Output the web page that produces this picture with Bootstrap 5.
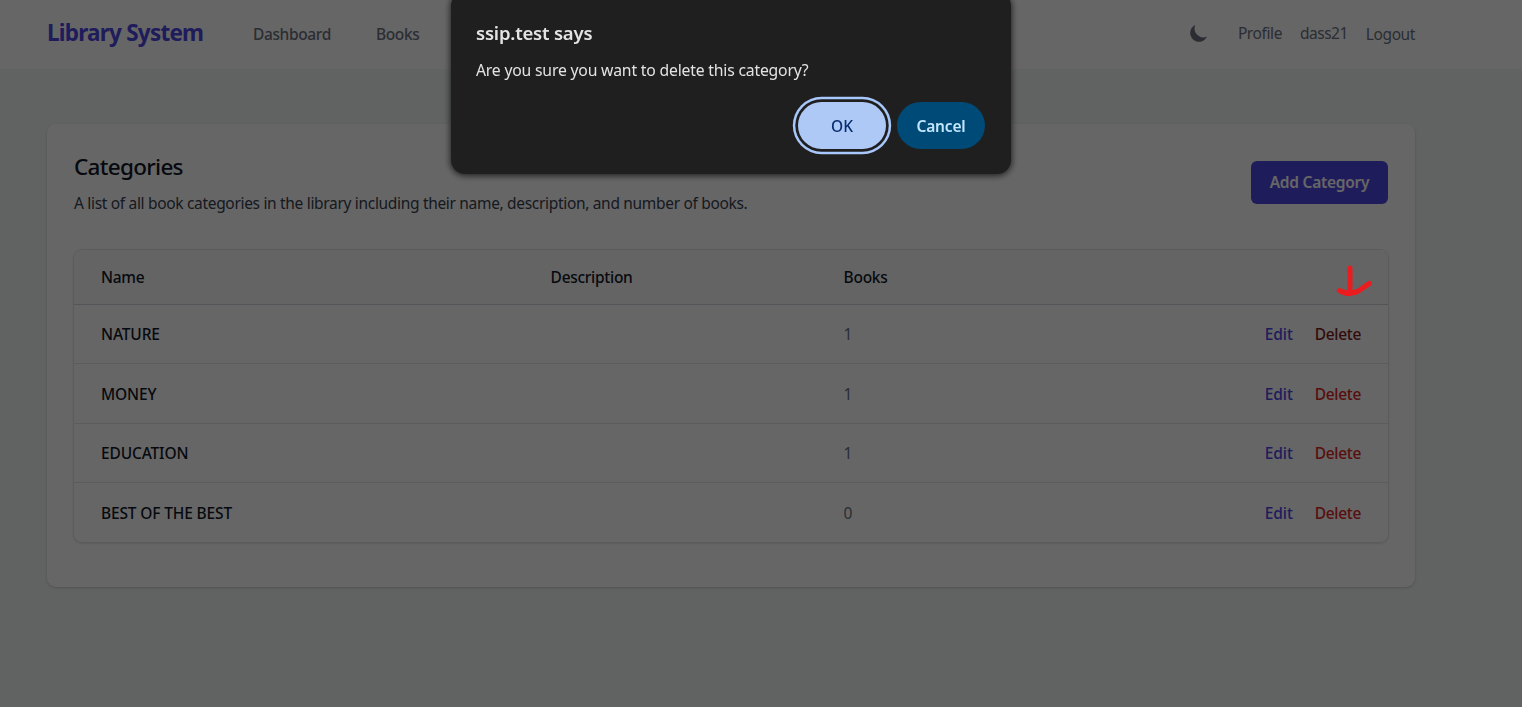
<!DOCTYPE html>
<html lang="en">
<head>
<meta charset="utf-8">
<meta name="viewport" content="width=device-width, initial-scale=1">
<title>Categories - Library System</title>
<link href="https://cdn.jsdelivr.net/npm/bootstrap@5.3.0/dist/css/bootstrap.min.css" rel="stylesheet">
<style>
  body { font-family: "Noto Sans", "Open Sans", sans-serif; font-size: 15.5px; line-height: 24px; background: #f2f7f5; height: 707px; overflow: hidden; letter-spacing: -.3px; }
  a { text-decoration: none; }
  .page-wrap { width: 1368px; margin-left: 47px; }
  .topbar { height: 69px; background: #fff; }
  .brand-name { font-size: 22.5px; font-weight: 700; color: #4f46e5; letter-spacing: -.77px; line-height: 32px; width: 206px; margin-top: -3px; }
  .main-links { gap: 45px; margin-top: -1px; }
  .main-links a { color: #6b7280; font-weight: 500; letter-spacing: -.37px; }
  .user-links { gap: 18px; letter-spacing: -.4px; }
  .user-links a, .user-links span { color: #6b7280; margin-top: -3px; }
  .user-links span { letter-spacing: -.5px; }
  .user-links a:last-child { margin-top: -1px; }
  .moon { margin: -4px 10px 0 0; }
  .panel { margin-top: 55px; height: 463px; background: #fff; border-radius: 9px; padding: 27px; box-shadow: 0 1px 3px rgba(0,0,0,.12), 0 1px 2px rgba(0,0,0,.06); }
  .panel h1 { font-size: 22.5px; font-weight: 500; line-height: 32px; color: #111827; letter-spacing: -.7px; margin: 0 0 8px; }
  .panel .intro { color: #374151; letter-spacing: -.32px; }
  .btn-add { width: 137px; height: 43px; margin-top: 10px; border-radius: 6px; background: #4f46e5; color: #fff; font-weight: 600; font-size: 15.5px; letter-spacing: -.25px; line-height: 43px; padding: 0; border: 0; }
  .list-box { margin: 34px -1px 0; height: 294px; border: 1px solid #e3e4e7; border-radius: 9px; overflow: hidden; box-shadow: 0 1px 2px rgba(0,0,0,.1); }
  .cat-table { table-layout: fixed; margin: 0; width: 100%; --bs-table-bg: transparent; }
  .cat-table th, .cat-table td { padding: 0 13px; vertical-align: middle; border-bottom: 1px solid #e5e7eb; font-weight: 500; color: #111827; }
  .cat-table thead { border: 0; }
  .cat-table th { height: 55px; background: #f9fafb; border-bottom-color: #d1d5db; letter-spacing: -.28px; }
  .cat-table td { height: 59.5px; letter-spacing: -.15px; }
  .cat-table > :not(caption) > * > * { border-bottom-width: 1px; }
  .cat-table { margin-top: -.6px; }
  .cat-table tr > :first-child { padding-left: 27px; }
  .cat-table tr > :last-child { padding-right: 27px; }
  .cat-table tbody tr:last-child td { border-bottom: 0; }
  .cat-table .count { color: #6b7280; font-weight: 400; }
  .cat-table .name-col { width: 463.6px; }
  .cat-table .mid-col { width: 293px; }
  .edit-link { color: #4f46e5; margin-right: 22px; letter-spacing: -.1px; }
  .delete-link { color: #dc2626; letter-spacing: -.32px; }
  .delete-link.is-active { color: #7f1d1d; }
  .dim { position: fixed; inset: 0; background: rgba(0,0,0,.6); }
  .prompt { position: fixed; left: 451px; top: -8px; width: 560px; height: 182px; border-radius: 14px; background: #1f1f1f; color: #e3e3e3; padding: 28px 26px 24px 25px; box-shadow: 0 1px 6px 1px rgba(0,0,0,.65); }
  .prompt h2 { font-size: 18.5px; font-weight: 600; line-height: 26px; letter-spacing: -.2px; margin: 0 0 12px; }
  .prompt p { font-size: 15.75px; letter-spacing: -.2px; margin: 0 0 20px; }
  .prompt-actions { gap: 11px; }
  .btn-pill { width: 88px; height: 47px; border-radius: 24px; border: 0; padding: 2px 0 0; font-size: 15.5px; font-weight: 500; letter-spacing: 0; }
  .btn-ok { background: #afc9f7; color: #062e6f; box-shadow: 0 0 0 2.700px #1f1f1f, 0 0 0 5.200px #a8c7fa; }
  .btn-no { background: #004a77; color: #c2e7ff; font-weight: 600; letter-spacing: -.15px; }
  .pen-mark { position: fixed; left: 1330px; top: 260px; }
</style>
</head>
<body>
<header class="topbar">
  <div class="page-wrap h-100 d-flex align-items-center">
    <a class="brand-name" href="#">Library System</a>
    <nav class="main-links d-flex">
      <a href="#">Dashboard</a>
      <a href="#">Books</a>
    </nav>
    <div class="user-links d-flex align-items-center ms-auto">
      <svg class="moon" width="22" height="22" viewBox="0 0 20 20" fill="#6b7280"><path d="M17.293 13.293A8 8 0 016.707 2.707a8.001 8.001 0 1010.586 10.586z"/></svg>
      <a href="#">Profile</a>
      <span>dass21</span>
      <a href="#">Logout</a>
    </div>
  </div>
</header>
<main class="page-wrap">
  <section class="panel">
    <div class="d-flex justify-content-between align-items-start">
      <div>
        <h1>Categories</h1>
        <p class="intro mb-0">A list of all book categories in the library including their name, description, and number of books.</p>
      </div>
      <button class="btn btn-add">Add Category</button>
    </div>
    <div class="list-box">
      <table class="table cat-table">
        <colgroup><col class="name-col"><col class="mid-col"><col class="mid-col"><col></colgroup>
        <thead><tr><th>Name</th><th>Description</th><th>Books</th><th></th></tr></thead>
        <tbody>
          <tr><td>NATURE</td><td></td><td class="count">1</td><td class="text-end"><a class="edit-link" href="#">Edit</a><a class="delete-link is-active" href="#">Delete</a></td></tr>
          <tr><td>MONEY</td><td></td><td class="count">1</td><td class="text-end"><a class="edit-link" href="#">Edit</a><a class="delete-link" href="#">Delete</a></td></tr>
          <tr><td>EDUCATION</td><td></td><td class="count">1</td><td class="text-end"><a class="edit-link" href="#">Edit</a><a class="delete-link" href="#">Delete</a></td></tr>
          <tr><td>BEST OF THE BEST</td><td></td><td class="count">0</td><td class="text-end"><a class="edit-link" href="#">Edit</a><a class="delete-link" href="#">Delete</a></td></tr>
        </tbody>
      </table>
    </div>
  </section>
</main>
<div class="dim"></div>
<div class="prompt" role="dialog">
  <h2>ssip.test says</h2>
  <p>Are you sure you want to delete this category?</p>
  <div class="prompt-actions d-flex justify-content-end">
    <button class="btn btn-pill btn-ok">OK</button>
    <button class="btn btn-pill btn-no">Cancel</button>
  </div>
</div>
<svg class="pen-mark" width="50" height="42" viewBox="0 0 50 42" fill="none" stroke="#ea1c1f" stroke-width="5" stroke-linecap="round" stroke-linejoin="round"><path d="M20 8v24M9.300 30.500c4 1.800 8 2.500 11 2.500 8 0 10-4 19-9.500M11 31.500c3 1.500 6 2.300 9 2.300"/></svg>
<script src="https://cdn.jsdelivr.net/npm/bootstrap@5.3.0/dist/js/bootstrap.bundle.min.js"></script>
</body>
</html>
